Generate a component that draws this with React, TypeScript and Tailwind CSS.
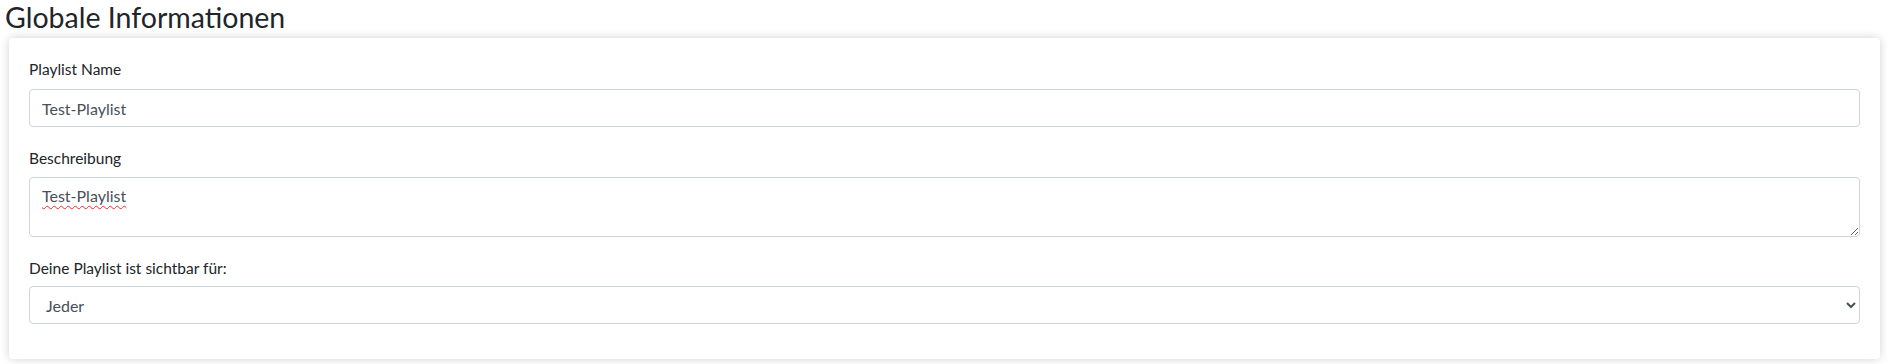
import React from "react";

export default function App() {
  const font = { fontFamily: "Lato, 'Liberation Sans', sans-serif" };
  return (
    <div className="w-[1888px] h-[364px] bg-white pr-2 text-[#212529]" style={font}>
      <h2 className="pl-[5px] text-[28.5px] leading-[34px] font-normal mb-1 text-[#212529]">Globale Informationen</h2>
      <div className="ml-[9px] bg-white rounded-[4px] shadow-[0_0_10px_rgba(0,0,0,0.18)] px-5 pt-5 pb-[35px]">
        <div className="mb-5">
          <label className="block text-[15.5px] leading-[22px] mb-[9px]">Playlist Name</label>
          <input
            type="text"
            defaultValue="Test-Playlist"
            className="block w-full h-[38px] px-3 text-[16px] text-[#495057] bg-white border border-[#ced4da] rounded-[4px] outline-none"
            style={font}
          />
        </div>
        <div className="mb-5">
          <label className="block text-[15.5px] leading-[22px] mb-2">Beschreibung</label>
          <div className="relative">
            <textarea
              defaultValue="Test-Playlist"
              spellCheck={false}
              className="block w-full h-[60px] px-3 py-[6px] text-[16px] leading-[24px] text-[#495057] bg-white border border-[#ced4da] rounded-[4px] outline-none"
              style={font}
            />
            <div className="pointer-events-none absolute left-0 top-0 px-[13px] py-[7px] text-[16px] leading-[24px] text-transparent">
              <span className="underline decoration-wavy decoration-[#e03030] decoration-1 underline-offset-[3px]">Test-Playlist</span>
            </div>
          </div>
        </div>
        <div>
          <label className="block text-[15.5px] leading-[22px] mb-[7px]">Deine Playlist ist sichtbar für:</label>
          <select
            defaultValue="Jeder"
            className="block w-full h-[38px] px-3 text-[16px] text-[#495057] bg-white border border-[#ced4da] rounded-[4px] outline-none"
            style={font}
          >
            <option>Jeder</option>
            <option>Nur ich</option>
          </select>
        </div>
      </div>
    </div>
  );
}
